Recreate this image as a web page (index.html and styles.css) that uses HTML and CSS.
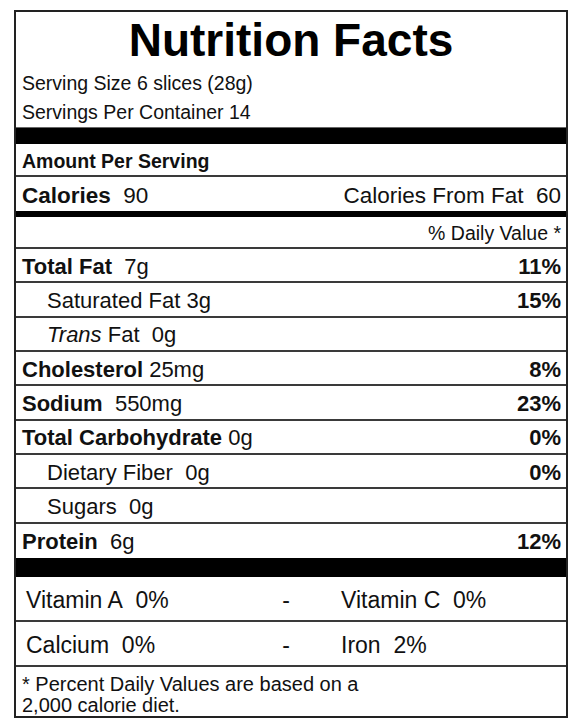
FILE: index.html
```html
<!DOCTYPE html>
<html lang="en">

<head>
    <meta charset="UTF-8">
    <meta name="viewport" content="width=device-width, initial-scale=1.0">
    <title>Nutrition Facts</title>
    <link rel="stylesheet" href="styles.css">
</head>

<body>

    <div class="label">
        <div class="title">Nutrition Facts</div>
        <div class="serving">Serving Size 6 slices (28g)</div>
        <div class="serving serving-last">Servings Per Container 14</div>

        <div class="bar"></div>

        <div class="row amount"><b>Amount Per Serving</b></div>
        <div class="row calories">
            <span><b>Calories</b>&nbsp; 90</span>
            <span>Calories From Fat&nbsp; 60</span>
        </div>
        <div class="row daily">% Daily Value *</div>

        <div class="row nutrient">
            <span><b>Total Fat</b>&nbsp; 7g</span>
            <b>11%</b>
        </div>
        <div class="row nutrient sub">
            <span>Saturated Fat 3g</span>
            <b>15%</b>
        </div>
        <div class="row nutrient sub">
            <span><i>Trans</i> Fat&nbsp; 0g</span>
        </div>
        <div class="row nutrient">
            <span><b>Cholesterol</b> 25mg</span>
            <b>8%</b>
        </div>
        <div class="row nutrient">
            <span><b>Sodium</b>&nbsp; 550mg</span>
            <b>23%</b>
        </div>
        <div class="row nutrient">
            <span><b>Total Carbohydrate</b> 0g</span>
            <b>0%</b>
        </div>
        <div class="row nutrient sub">
            <span>Dietary Fiber&nbsp; 0g</span>
            <b>0%</b>
        </div>
        <div class="row nutrient sub">
            <span>Sugars&nbsp; 0g</span>
        </div>
        <div class="row nutrient last">
            <span><b>Protein</b>&nbsp; 6g</span>
            <b>12%</b>
        </div>

        <div class="bar bar-bottom"></div>

        <div class="vitamins">
            <span>Vitamin A&nbsp; 0%</span>
            <span class="dash">-</span>
            <span class="right">Vitamin C&nbsp; 0%</span>
        </div>
        <div class="vitamins">
            <span>Calcium&nbsp; 0%</span>
            <span class="dash">-</span>
            <span class="right">Iron&nbsp; 2%</span>
        </div>

        <div class="footnote">* Percent Daily Values are based on a<br>2,000 calorie diet.</div>
    </div>

</body>

</html>
```

FILE: styles.css
```css
body {
    margin: 0;
    background: #fff;
    font-family: "Liberation Sans", Arial, sans-serif;
    color: #111;
}

.label {
    width: 554px;
    margin: 10px 0 0 14px;
    border: 2px solid #222;
    box-sizing: border-box;
}

.title {
    height: 56px;
    line-height: 56px;
    text-align: center;
    font-size: 46px;
    font-weight: bold;
    color: #000;
}

.serving {
    height: 30px;
    line-height: 30px;
    padding-left: 6px;
    font-size: 19.5px;
}

.serving-last {
    height: 29px;
    line-height: 29px;
}

.bar {
    height: 17px;
    background: #000;
    border-top: 1px solid #666;
    box-sizing: border-box;
}

.bar-bottom {
    height: 19px;
    border-top: none;
}

.row {
    display: flex;
    justify-content: space-between;
    align-items: center;
    box-sizing: border-box;
    padding: 3px 5px 0 6px;
    border-bottom: 2px solid #3a3a3a;
}

.amount {
    height: 33px;
    padding-top: 4px;
    font-size: 19.5px;
}

.calories {
    height: 40px;
    padding-top: 4px;
    font-size: 22.5px;
    border-bottom: 6px solid #000;
}

.daily {
    height: 32px;
    justify-content: flex-end;
    font-size: 19.5px;
}

.nutrient {
    height: 34.33px;
    font-size: 22px;
}

.nutrient.sub {
    padding-left: 31px;
}

.nutrient.last {
    border-bottom: none;
}

.vitamins {
    display: grid;
    grid-template-columns: 251px 18px 1fr;
    align-items: center;
    box-sizing: border-box;
    height: 45px;
    padding: 4px 0 0 10px;
    font-size: 23px;
    border-bottom: 2px solid #3a3a3a;
}

.vitamins .dash {
    text-align: center;
}

.vitamins .right {
    padding-left: 46px;
}

.footnote {
    height: 49px;
    padding: 7px 0 0 6px;
    box-sizing: border-box;
    font-size: 20px;
    line-height: 21px;
}
```
